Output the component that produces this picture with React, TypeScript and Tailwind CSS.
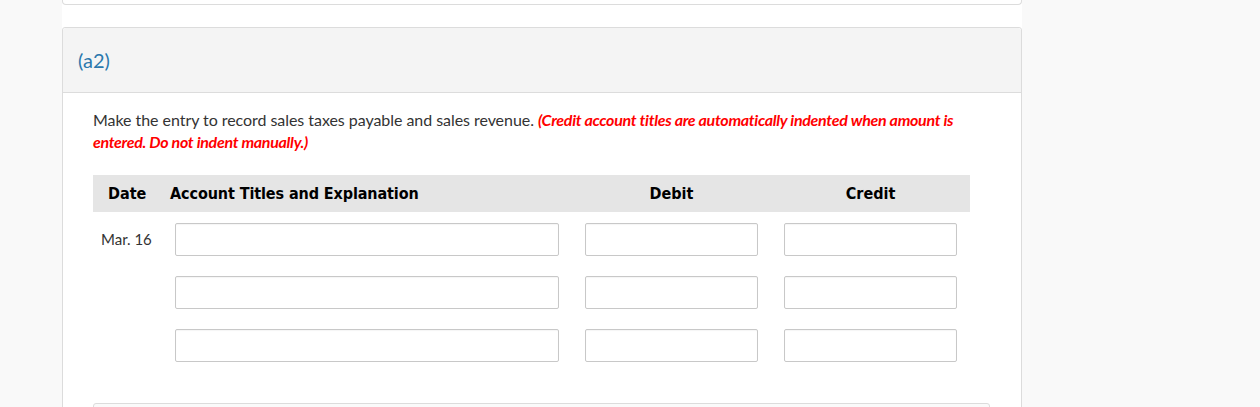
const inputCls =
  "h-[33px] border border-[#c8c8c8] rounded-[2px] bg-white shadow-[inset_0_1px_1px_rgba(0,0,0,0.04)]";

function EntryRow({ date }: { date?: string }) {
  return (
    <div className="flex items-center h-[33px]">
      <div className="w-[82px] shrink-0 pl-[8px] text-[15px] text-[#333]">{date}</div>
      <div className={`w-[384px] ${inputCls}`} />
      <div className={`ml-[26px] w-[173px] ${inputCls}`} />
      <div className={`ml-[26px] w-[173px] ${inputCls}`} />
    </div>
  );
}

export default function App() {
  return (
    <div
      className="h-[407px] overflow-hidden bg-[#f9f9f9]"
      style={{ fontFamily: "Lato, 'Open Sans', sans-serif" }}
    >
      <div className="ml-[62px] w-[960px] h-full bg-white">
        {/* end of previous card */}
        <div className="h-[5px] border border-t-0 border-[#dcdcdc] rounded-b-[4px]" />

        <div className="mt-[22px] border border-[#dcdcdc] rounded-t-[3px] h-[400px]">
          <div className="h-[65px] bg-[#f4f4f4] border-b border-[#dcdcdc] flex items-center pl-[15px] rounded-t-[3px]">
            <span className="text-[20px] text-[#2b78ad]">(a2)</span>
          </div>

          <div className="pl-[30px] pt-[16px]">
            <p className="w-[880px] text-[16px] leading-[22px] text-[#333] tracking-[-0.05px]">
              Make the entry to record sales taxes payable and sales revenue.{" "}
              <span className="text-[#ff0000] italic font-bold tracking-[-0.3px]">
                (Credit account titles are automatically indented when amount is entered. Do not
                indent manually.)
              </span>
            </p>

            <div
              className="mt-[22px] w-[877px] h-[37px] bg-[#e5e5e5] flex items-center text-[16px] font-bold text-black"
              style={{ fontFamily: "Tahoma, 'DejaVu Sans Condensed', 'Liberation Sans', sans-serif" }}
            >
              <div className="w-[77px] pl-[15px]">Date</div>
              <div className="w-[389px] tracking-[-0.1px]">Account Titles and Explanation</div>
              <div className="ml-[26px] w-[173px] text-center">Debit</div>
              <div className="ml-[26px] w-[173px] text-center">Credit</div>
            </div>

            <div className="mt-[11px] flex flex-col gap-[20px]">
              <EntryRow date="Mar. 16" />
              <EntryRow />
              <EntryRow />
            </div>

            <div className="mt-[41px] w-[897px] h-[20px] border border-[#dcdcdc] rounded-t-[3px] bg-[#fafafa]" />
          </div>
        </div>
      </div>
    </div>
  );
}
